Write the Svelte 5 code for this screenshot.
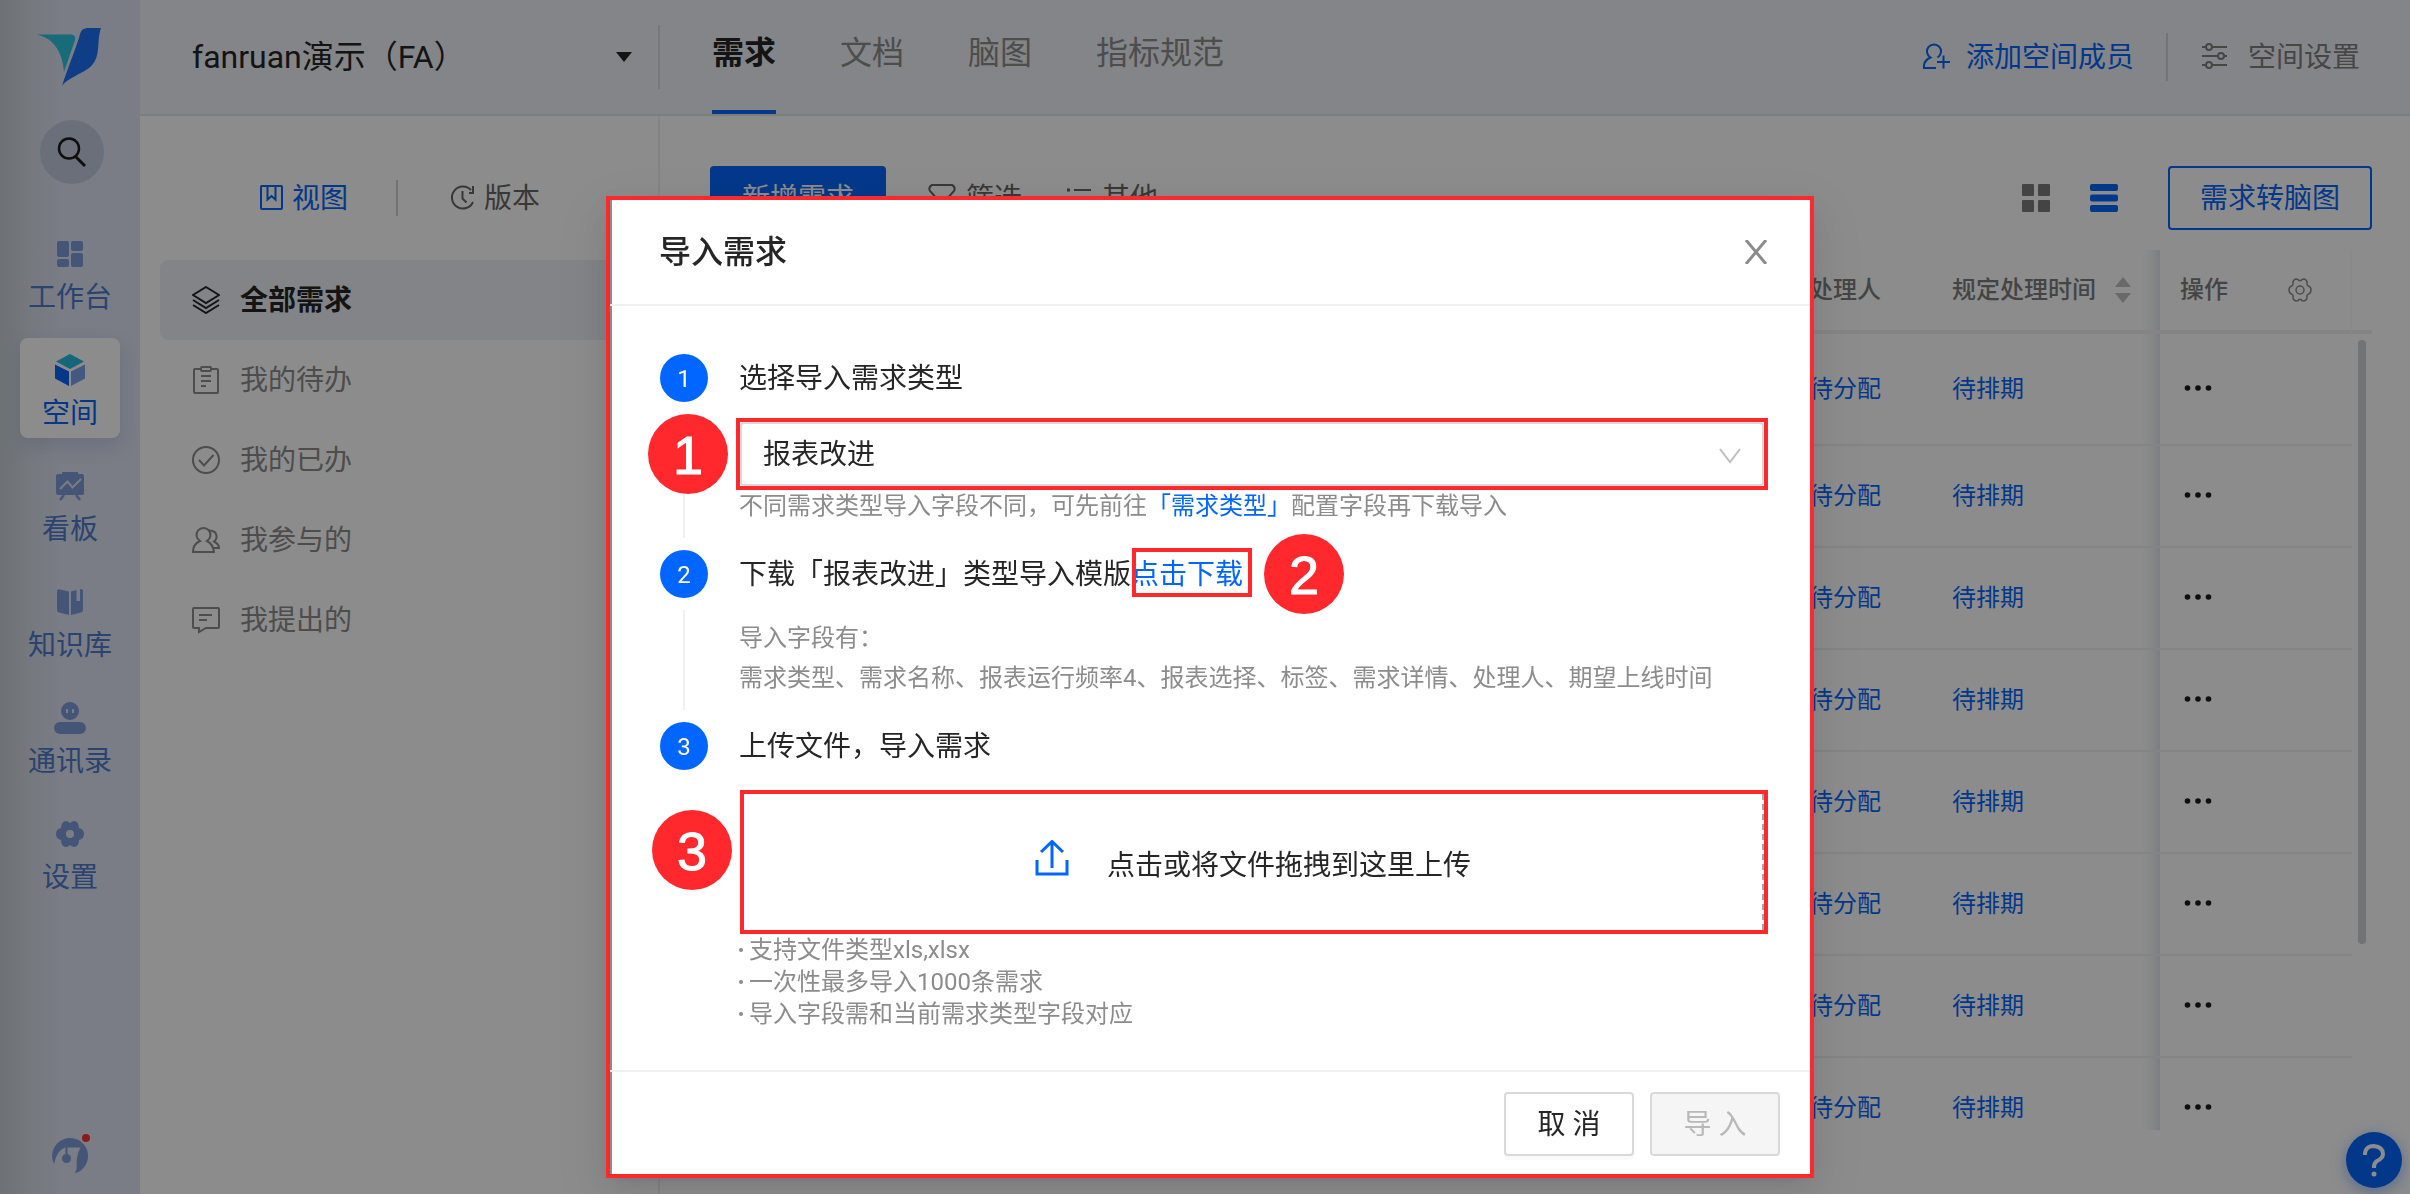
<script lang="ts">
	// Demand list page with the import dialog open

	const sideItems = [
		{ id: 'work', label: '工作台' },
		{ id: 'space', label: '空间' },
		{ id: 'board', label: '看板' },
		{ id: 'wiki', label: '知识库' },
		{ id: 'contacts', label: '通讯录' },
		{ id: 'settings', label: '设置' }
	];

	const tabs = ['需求', '文档', '脑图', '指标规范'];

	const views = [
		{ id: 'all', label: '全部需求' },
		{ id: 'todo', label: '我的待办' },
		{ id: 'done', label: '我的已办' },
		{ id: 'joined', label: '我参与的' },
		{ id: 'raised', label: '我提出的' }
	];

	const rows = Array.from({ length: 8 }, () => ({ handler: '待分配', due: '待排期' }));

	const uploadNotes = [
		'支持文件类型xls,xlsx',
		'一次性最多导入1000条需求',
		'导入字段需和当前需求类型字段对应'
	];

	let activeSide = $state('space');
	let activeTab = $state('需求');
	let activeView = $state('all');
	let demandType = $state('报表改进');
</script>

<div class="app">
	<nav class="sidebar" aria-label="主导航">
		<svg class="logo" width="65" height="58" viewBox="0 0 65 58">
			<path fill="#2cc3dc" d="M0 6.500H33C38 6.500 40 8 39 12L28 44C27 28 20 10 0 6.500Z" />
			<path fill="#1c70f5" d="M53 0H65C62 9 63 16 61.500 25C59 39 50 42 41 47C34 51 29 53 26 58C31 42 40 20 43.500 8C45 2 47 0 53 0Z" />
		</svg>
		<button class="search" type="button" aria-label="搜索">
			<svg width="32" height="32" viewBox="0 0 32 32" fill="none" stroke="#1c1c1c" stroke-width="2.500">
				<circle cx="13" cy="12.500" r="10" />
				<path d="M19.500 20.500L29 30" stroke-width="3" />
			</svg>
		</button>
		<div class="side-list">
			{#each sideItems as item}
				<button
					type="button"
					class="side-item"
					class:active={activeSide === item.id}
					onclick={() => (activeSide = item.id)}
				>
					<svg width="32" height="32" viewBox="0 0 32 32" fill="currentColor">
						{#if item.id === 'work'}
							<rect x="3" y="3" width="12" height="16" rx="2" />
							<rect x="17" y="3" width="12" height="10" rx="2" />
							<rect x="3" y="21" width="12" height="8" rx="2" />
							<rect x="17" y="15" width="12" height="14" rx="2" />
						{:else if item.id === 'space'}
							<path fill="#28bcdc" d="M16 0L30 7.500L16 15L2 7.500Z" />
							<path fill="#0566fb" d="M1 10.500L15 17.500V32L1 24.500Z" />
							<path fill="#7ba3ec" d="M31 10.500L17 17.500V32L31 24.500Z" />
						{:else if item.id === 'board'}
							<path d="M8 2H24V4H28Q30 4 30 6V23Q30 25 28 25H4Q2 25 2 23V6Q2 4 4 4H8Z" />
							<path d="M6 19L13.500 11.500L18.500 17.500L27 9" fill="none" stroke="#dde1ef" stroke-width="2" />
							<path d="M10 25L6 30M22 25L26 30" stroke="currentColor" stroke-width="2.500" />
						{:else if item.id === 'wiki'}
							<path d="M3 5Q3 3 5 3.300L15 5.500V29L5 26.500Q3 26 3 24Z" />
							<path d="M17 5.500L22.500 4V15H26V3.300Q29 3 29 5V24Q29 26 27 26.500L17 29Z" />
							<path d="M26.500 3.200Q29 2.800 29 5V15H26.500Z" />
						{:else if item.id === 'contacts'}
							<path fill-rule="evenodd" d="M16 0A9 9 0 1 1 16 18A9 9 0 1 1 16 0ZM12 7V11H14V7ZM18 7V11H20V7Z" />
							<rect x="0" y="20" width="32" height="12" rx="6" />
						{:else}
							<path
								fill-rule="evenodd"
								d="M11.500 3Q14 3 16 5Q18 3 20.500 3Q25 4 25 10Q30 11 30 16Q30 21 25 22Q25 28 20.500 29Q18 29 16 27Q14 29 11.500 29Q7 28 7 22Q2 21 2 16Q2 11 7 10Q7 4 11.500 3ZM16 12A4 4 0 1 0 16 20A4 4 0 1 0 16 12Z"
							/>
						{/if}
					</svg>
					<span>{item.label}</span>
				</button>
			{/each}
		</div>
		<button class="support" type="button" aria-label="客服">
			<svg width="44" height="44" viewBox="0 0 44 44">
				<g transform="translate(4 6)" fill="#7f9bd9">
					<path d="M2 26A18 18 0 1 1 23 35.300Q25.500 31 24.500 24Q25 16 28.500 9.500H13Q5 12 2 26Z" />
					<circle cx="14.500" cy="20.500" r="4.500" />
					<path d="M13.500 9H15.500V18H13.500Z" />
				</g>
				<circle cx="38" cy="6" r="5" fill="#f5333f" stroke="#f3dfe4" stroke-width="2" />
			</svg>
		</button>
	</nav>

	<div class="page">
		<header class="topbar">
			<button class="space-switch" type="button">
				<span>fanruan演示（FA）</span>
				<svg width="16" height="10" viewBox="0 0 16 10"><path fill="#262626" d="M0 0H16L8 10Z" /></svg>
			</button>
			<div class="tabs" role="tablist">
				{#each tabs as tab}
					<button
						type="button"
						role="tab"
						class="tab"
						class:active={activeTab === tab}
						aria-selected={activeTab === tab}
						onclick={() => (activeTab = tab)}
					>
						{tab}
					</button>
				{/each}
			</div>
			<div class="top-actions">
				<button class="top-action primary" type="button">
					<svg width="28" height="28" viewBox="0 0 28 28" fill="none" stroke="currentColor" stroke-width="2">
						<path d="M14 25H2Q1 18 8.500 14.500A7 7 0 1 1 15.500 14.500" />
						<path d="M15 19H28M21.500 12.500V25.500" />
					</svg>
					<span>添加空间成员</span>
				</button>
				<button class="top-action" type="button">
					<svg width="26" height="28" viewBox="0 0 26 28" fill="none" stroke="currentColor" stroke-width="2">
						<path d="M0 4H4M10 4H25M0 13H16M22 13H25M0 22H4M10 22H25" />
						<circle cx="7" cy="4" r="3" />
						<circle cx="19" cy="13" r="3" />
						<circle cx="7" cy="22" r="3" />
					</svg>
					<span>空间设置</span>
				</button>
			</div>
		</header>

		<div class="content">
			<aside class="views">
				<div class="view-tabs">
					<button type="button" class="view-tab active">
						<svg width="24" height="26" viewBox="0 0 24 26" fill="none" stroke="currentColor" stroke-width="2">
							<rect x="1" y="1" width="21" height="23" rx="1" />
							<path d="M7.500 1V14.500L11.500 11L15.500 14.500V1" />
						</svg>
						<span>视图</span>
					</button>
					<button type="button" class="view-tab">
						<svg width="26" height="26" viewBox="0 0 26 26" fill="none" stroke="currentColor" stroke-width="2">
							<path d="M23 17A11 11 0 1 1 21 5M23 1V8H19" />
							<path d="M12.500 6V13.500L16.500 17.500" />
						</svg>
						<span>版本</span>
					</button>
				</div>
				<ul class="view-list">
					{#each views as view}
						<li>
							<button
								type="button"
								class="view-item"
								class:active={activeView === view.id}
								onclick={() => (activeView = view.id)}
							>
								<svg width="28" height="28" viewBox="0 0 28 28" fill="none" stroke="currentColor" stroke-width="2">
									{#if view.id === 'all'}
										<path d="M14 1L27 9L14 17L1 9Z" />
										<path d="M1 14L14 22L27 14M1 19L14 27L27 19" />
									{:else if view.id === 'todo'}
										<path d="M9 3H3Q2 3 2 4V26Q2 27 3 27H25Q26 27 26 26V4Q26 3 25 3H19" />
										<rect x="9" y="1" width="10" height="4" rx="1" />
										<path d="M9 10H19M9 15H19M9 20H14" />
									{:else if view.id === 'done'}
										<circle cx="14" cy="14" r="13" />
										<path d="M7 14L12 19.500L21.500 9" />
									{:else if view.id === 'joined'}
										<path d="M8 15A7 7 0 1 1 15 15Q21 18 22 26H1Q1 18 8 15Z" />
										<path d="M16 4.500Q24 4 24.500 10Q25 13 22 15.500Q27 18 27 22H22" />
									{:else}
										<path d="M2 2H26Q27 2 27 3V21Q27 22 26 22H14L7 26V22H2Q1 22 1 21V3Q1 2 2 2Z" />
										<path d="M7 9H20M7 14H15" />
									{/if}
								</svg>
								<span>{view.label}</span>
							</button>
						</li>
					{/each}
				</ul>
			</aside>

			<main class="main">
				<div class="toolbar">
					<button class="btn-primary" type="button">新增需求</button>
					<button class="tool" type="button">
						<svg width="28" height="28" viewBox="0 0 28 28" fill="none" stroke="currentColor" stroke-width="2">
							<path d="M4 1H24Q28 3 26 7L18 16V26H10V16L2 7Q0 3 4 1Z" />
						</svg>
						<span>筛选</span>
					</button>
					<button class="tool" type="button">
						<svg width="26" height="28" viewBox="0 0 26 28" fill="none" stroke="currentColor" stroke-width="2">
							<path d="M8 6H25M8 15H25M8 24H25" />
							<path d="M1 6H4M1 15H4M1 24H4" stroke-width="3" />
						</svg>
						<span>其他</span>
					</button>
					<div class="layout-switch">
						<button type="button" aria-label="卡片视图">
							<svg width="28" height="28" viewBox="0 0 28 28" fill="#7d7d7d">
								<rect width="12" height="12" rx="1" />
								<rect x="16" width="12" height="12" rx="1" />
								<rect y="16" width="12" height="12" rx="1" />
								<rect x="16" y="16" width="12" height="12" rx="1" />
							</svg>
						</button>
						<button type="button" aria-label="列表视图">
							<svg width="28" height="28" viewBox="0 0 28 28" fill="#0566fb">
								<rect width="28" height="7" rx="2" />
								<rect y="10.500" width="28" height="7" rx="2" />
								<rect y="21" width="28" height="7" rx="2" />
							</svg>
						</button>
					</div>
					<button class="btn-outline" type="button">需求转脑图</button>
				</div>

				<div class="table-wrap">
					<table>
						<colgroup>
							<col />
							<col class="col-handler" />
							<col class="col-due" />
							<col class="col-action" />
						</colgroup>
						<thead>
							<tr>
								<th></th>
								<th>处理人</th>
								<th class="edge">
									<div class="th-due">
										<span>规定处理时间</span>
										<svg width="16" height="26" viewBox="0 0 16 26" fill="#bfbfbf">
											<path d="M8 0L16 10H0ZM8 26L16 16H0Z" />
										</svg>
									</div>
								</th>
								<th class="action-head">
									<div class="th-action">
										<span>操作</span>
										<svg width="24" height="24" viewBox="0 0 24 24" fill="none" stroke="#8c8c8c" stroke-width="1.500">
											<path
												d="M8 1Q10 1 11 2.500H13Q14 1 16 1Q19.500 2 19 6Q19 7.500 20.500 8Q23 9 23 12Q23 15 20.500 16Q19 16.500 19 18Q19.500 22 16 23Q14 23 13 21.500H11Q10 23 8 23Q4.500 22 5 18Q5 16.500 3.500 16Q1 15 1 12Q1 9 3.500 8Q5 7.500 5 6Q4.500 2 8 1Z"
											/>
											<circle cx="12" cy="12" r="4" />
										</svg>
									</div>
								</th>
							</tr>
						</thead>
						<tbody>
							{#each rows as row}
								<tr>
									<td></td>
									<td><a href="#handler">{row.handler}</a></td>
									<td class="edge"><a href="#due">{row.due}</a></td>
									<td>
										<button class="more" type="button" aria-label="更多操作">
											<svg width="28" height="8" viewBox="0 0 28 8" fill="#1c1c1c">
												<circle cx="3.500" cy="3" r="2.800" />
												<circle cx="14" cy="3" r="2.800" />
												<circle cx="24.500" cy="3" r="2.800" />
											</svg>
										</button>
									</td>
								</tr>
							{/each}
						</tbody>
					</table>
					<div class="gutter"><div class="thumb"></div></div>
				</div>
			</main>
		</div>
	</div>

	<button class="help" type="button" aria-label="帮助">
		<svg width="24" height="34" viewBox="0 0 24 34" fill="none" stroke="#fff" stroke-width="4">
			<path d="M3 12V10Q4 3 12 3Q21 4 21 11Q21 15 15 18Q12 20 12 24V25" />
			<circle cx="12" cy="31" r="2.500" fill="#fff" stroke="none" />
		</svg>
	</button>
</div>

<div class="mask">
	<div class="modal" role="dialog" aria-modal="true" aria-labelledby="import-title">
		<div class="modal-header">
			<h2 id="import-title">导入需求</h2>
			<button class="close" type="button" aria-label="关闭">
				<svg width="24" height="24" viewBox="0 0 24 24" stroke="#8c8c8c" stroke-width="3">
					<path d="M2 0L22 24M22 0L2 24" />
				</svg>
			</button>
		</div>

		<ol class="steps">
			<li class="step">
				<div class="marker"><span class="dot">1</span></div>
				<div class="step-content">
					<label class="step-title" for="demand-type">选择导入需求类型</label>
					<div class="callout callout-select">
						<span class="pin pin-select">1</span>
						<select id="demand-type" bind:value={demandType}>
							<option>报表改进</option>
						</select>
						<svg class="chevron" width="22" height="16" viewBox="0 0 22 16" fill="none" stroke="#bfbfbf" stroke-width="2">
							<path d="M1 1L11 14L21 1" />
						</svg>
					</div>
					<p class="hint">
						不同需求类型导入字段不同，可先前往<a href="#types">「需求类型」</a>配置字段再下载导入
					</p>
				</div>
			</li>
			<li class="step">
				<div class="marker"><span class="dot">2</span></div>
				<div class="step-content fields">
					<div class="step-title">
						下载「{demandType}」类型导入模版<a class="download" href="#template">点击下载<span class="pin pin-download">2</span></a>
					</div>
					<p class="field-list">
						导入字段有：<br />需求类型、需求名称、报表运行频率4、报表选择、标签、需求详情、处理人、期望上线时间
					</p>
				</div>
			</li>
			<li class="step">
				<div class="marker"><span class="dot">3</span></div>
				<div class="step-content">
					<div class="step-title">上传文件，导入需求</div>
					<div class="callout callout-upload">
						<span class="pin pin-upload">3</span>
						<label class="upload">
							<input type="file" accept=".xls,.xlsx" />
							<svg width="34" height="44" viewBox="0 0 34 44" fill="none" stroke="#0066ff" stroke-width="3">
								<path d="M2 20V34H32V20" />
								<path d="M17 28V2M6 12L17 1.500L28 12" />
							</svg>
							<span>点击或将文件拖拽到这里上传</span>
						</label>
					</div>
					<ul class="notes">
						{#each uploadNotes as note}
							<li>{note}</li>
						{/each}
					</ul>
				</div>
			</li>
		</ol>

		<div class="modal-footer">
			<button class="btn" type="button">取 消</button>
			<button class="btn" type="button" disabled>导 入</button>
		</div>
	</div>
</div>

<style>
	:global(body) {
		overflow: hidden;
		font-family: Roboto, 'Noto Sans CJK SC', sans-serif;
		font-size: 28px;
		line-height: 40px;
		color: #262626;
	}

	button {
		padding: 0;
		border: none;
		background: none;
		font: inherit;
		color: inherit;
		white-space: nowrap;
		cursor: pointer;
	}

	a {
		color: #0066ff;
		text-decoration: none;
	}

	svg {
		display: block;
		flex-shrink: 0;
	}

	ul,
	ol {
		margin: 0;
		padding: 0;
		list-style: none;
	}

	h2,
	p {
		margin: 0;
	}

	.app {
		display: flex;
		height: 100vh;
		background: #fff;
	}

	/* Sidebar */
	.sidebar {
		display: flex;
		flex-direction: column;
		align-items: center;
		width: 140px;
		flex-shrink: 0;
		box-sizing: border-box;
		padding: 28px 0 18px;
		background: linear-gradient(to right, #c6cfd5, #d6dbe5 30px, #dee3f3 60px);
	}

	.logo {
		margin-right: 4px;
	}

	.search {
		display: flex;
		align-items: center;
		justify-content: center;
		width: 64px;
		height: 64px;
		margin: 34px 0 38px 4px;
		border-radius: 50%;
		background: #c2cbdc;
	}

	.side-list {
		display: flex;
		flex-direction: column;
		gap: 16px;
	}

	.side-item {
		display: flex;
		flex-direction: column;
		align-items: center;
		gap: 8px;
		width: 100px;
		height: 100px;
		box-sizing: border-box;
		padding-top: 16px;
		border-radius: 8px;
		color: #7f9bd9;
	}

	.side-item span {
		color: #4f7acb;
	}

	.side-item.active {
		background: #fff;
		box-shadow: 0 8px 20px rgba(80, 110, 170, 0.2);
	}

	.side-item.active span {
		color: #0566fb;
	}

	.support {
		margin: auto 0 0;
	}

	/* Top bar */
	.page {
		display: flex;
		flex: 1;
		flex-direction: column;
		min-width: 0;
	}

	.topbar {
		display: flex;
		align-items: center;
		height: 114px;
		flex-shrink: 0;
		padding-right: 50px;
		border-bottom: 2px solid #e0e3eb;
		background: #f0f2f7;
	}

	.space-switch {
		display: flex;
		align-items: center;
		justify-content: space-between;
		width: 520px;
		height: 64px;
		box-sizing: border-box;
		padding: 0 26px 0 52px;
		border-right: 2px solid #d8dbe2;
		font-size: 32px;
	}

	.tabs {
		display: flex;
		gap: 64px;
		height: 100%;
		margin-left: 52px;
	}

	.tab {
		box-sizing: border-box;
		padding-bottom: 4px;
		border-bottom: 4px solid transparent;
		font-size: 32px;
		color: #8c8c8c;
	}

	.tab.active {
		border-color: #0566fb;
		font-weight: 700;
		color: #262626;
	}

	.top-actions {
		display: flex;
		align-items: center;
		margin-left: auto;
	}

	.top-action {
		display: flex;
		align-items: center;
		gap: 16px;
		height: 48px;
		color: #808080;
	}

	.top-action + .top-action {
		gap: 20px;
		margin-left: 32px;
		padding-left: 34px;
		border-left: 2px solid #d0d3da;
	}

	.top-action.primary {
		color: #0566fb;
	}

	.top-action span,
	.view-tab span,
	.view-item span {
		padding-top: 2px;
	}

	/* View panel */
	.content {
		display: flex;
		flex: 1;
		min-height: 0;
	}

	.views {
		width: 520px;
		flex-shrink: 0;
		box-sizing: border-box;
		padding: 64px 18px 0 20px;
		border-right: 2px solid #f0f0f0;
	}

	.view-tabs {
		display: flex;
		align-items: center;
		justify-content: center;
		height: 36px;
		margin-bottom: 44px;
	}

	.view-tab {
		display: flex;
		align-items: center;
		gap: 8px;
		height: 36px;
		color: #666;
	}

	.view-tab + .view-tab {
		margin-left: 48px;
		padding-left: 52px;
		border-left: 2px solid #d0d0d0;
	}

	.view-tab.active {
		color: #0566fb;
	}

	.view-item {
		display: flex;
		align-items: center;
		gap: 20px;
		width: 100%;
		height: 80px;
		padding: 0 32px;
		border-radius: 8px;
		color: #8c8c8c;
	}

	.view-item.active {
		background: #eef0f6;
		font-weight: 700;
		color: #262626;
	}

	/* Demand table */
	.main {
		display: flex;
		flex: 1;
		flex-direction: column;
		min-width: 0;
		padding: 50px 38px 64px 50px;
	}

	.toolbar {
		display: flex;
		align-items: center;
		margin-bottom: 20px;
	}

	.btn-primary,
	.btn-outline {
		height: 64px;
		padding: 2px 32px 0;
		border-radius: 4px;
	}

	.btn-primary {
		background: #0566fb;
		color: #fff;
	}

	.btn-outline {
		padding: 2px 30px 0;
		border: 2px solid #0566fb;
		color: #0566fb;
	}

	.tool {
		display: flex;
		align-items: center;
		gap: 10px;
		margin-left: 42px;
		color: #666;
	}

	.tool + .tool {
		margin-left: 44px;
	}

	.tool span {
		padding-top: 2px;
	}

	.layout-switch {
		display: flex;
		gap: 40px;
		margin: 0 50px 0 auto;
	}

	.table-wrap {
		display: flex;
		flex: 1;
		min-height: 0;
		overflow: hidden;
		font-size: 24px;
		line-height: 32px;
	}

	table {
		flex: 1;
		width: 100%;
		height: max-content;
		table-layout: fixed;
		border-spacing: 0;
	}

	.col-handler {
		width: 143px;
	}

	.col-due {
		width: 228px;
	}

	.col-action {
		width: 192px;
	}

	th,
	td {
		box-sizing: border-box;
		height: 102px;
		padding: 0 0 0 20px;
		border-bottom: 2px solid #f0f0f0;
		text-align: left;
	}

	th {
		height: 84px;
		border-bottom: 4px solid #f0f0f0;
		font-weight: 500;
		color: #7d7d7d;
	}

	tbody tr:first-child td {
		height: 112px;
	}

	.edge {
		background: linear-gradient(to left, rgba(30, 50, 90, 0.13), rgba(30, 50, 90, 0.05) 8px, transparent 18px);
	}

	.th-due {
		display: flex;
		align-items: center;
		gap: 19px;
	}

	.th-action {
		display: flex;
		align-items: center;
		gap: 60px;
	}

	.action-head {
		border-right: 2px solid #fafafa;
	}

	td a {
		color: #0566fb;
	}

	.more {
		display: block;
		margin-left: 4px;
	}

	.gutter {
		width: 20px;
		flex-shrink: 0;
		padding-top: 80px;
	}

	.gutter::before {
		content: '';
		display: block;
		height: 4px;
		background: #f0f0f0;
	}

	.thumb {
		width: 8px;
		height: 604px;
		margin: 6px auto 0;
		border-radius: 4px;
		background: #cfd1d4;
	}

	.help {
		position: fixed;
		right: 8px;
		bottom: 6px;
		display: flex;
		align-items: center;
		justify-content: center;
		width: 56px;
		height: 56px;
		border-radius: 50%;
		background: #0566fb;
		box-shadow: 0 4px 16px rgba(5, 102, 251, 0.4);
	}

	/* Import dialog */
	.mask {
		position: fixed;
		inset: 0;
		display: flex;
		align-items: flex-start;
		justify-content: center;
		padding: 196px 0 0 10px;
		background: rgba(0, 0, 0, 0.45);
	}

	.modal {
		width: 1208px;
		box-sizing: border-box;
		border: 4px solid #ff282d;
		background: #fff;
		box-shadow:
			inset 2px 0 #8c8c8c,
			0 6px 12px -8px rgba(0, 0, 0, 0.12),
			0 12px 32px rgba(0, 0, 0, 0.08),
			0 18px 56px 16px rgba(0, 0, 0, 0.05);
	}

	.modal-header {
		display: flex;
		align-items: center;
		justify-content: space-between;
		height: 104px;
		padding: 0 42px 0 49px;
		border-bottom: 2px solid #f0f0f0;
	}

	.modal-header h2 {
		font-size: 32px;
		font-weight: 500;
	}

	.steps {
		padding: 48px 42px 40px 50px;
	}

	.step {
		display: flex;
		gap: 31px;
	}

	.marker {
		display: flex;
		flex-direction: column;
		align-items: center;
		width: 48px;
		flex-shrink: 0;
	}

	.dot {
		width: 48px;
		height: 46px;
		padding-top: 2px;
		border-radius: 50%;
		background: #0066ff;
		font-size: 24px;
		line-height: 46px;
		text-align: center;
		color: #fff;
	}

	.step:not(:last-child) .marker::after {
		content: '';
		flex: 1;
		width: 2px;
		margin: 12px 0;
		background: #f0f0f0;
	}

	.step-content {
		flex: 1;
		padding-bottom: 28px;
	}

	.step-content.fields {
		padding-bottom: 24px;
	}

	.step:last-child .step-content {
		padding-bottom: 0;
	}

	.step-title {
		display: block;
		height: 48px;
		line-height: 50px;
	}

	.callout {
		position: relative;
		border: 4px solid #ff282d;
	}

	.callout-select {
		margin: 16px 0 0 -3px;
	}

	.callout-upload {
		margin: 20px 0 0 1px;
	}

	.pin {
		position: absolute;
		z-index: 1;
		left: -92px;
		width: 80px;
		height: 80px;
		border-radius: 50%;
		background: #ff282d;
		font-family: 'Liberation Sans', sans-serif;
		font-size: 54px;
		line-height: 82px;
		text-align: center;
		color: #fff;
		-webkit-text-stroke: 1px #fff;
	}

	.pin-select {
		top: -8px;
	}

	.pin-upload {
		top: 16px;
	}

	.pin-download {
		top: -16px;
		left: 133px;
	}

	select {
		display: block;
		width: 100%;
		height: 64px;
		padding: 2px 60px 0 21px;
		border: 2px solid #d9d9d9;
		border-radius: 4px;
		appearance: none;
		background: #fff;
		font: inherit;
		color: inherit;
	}

	.chevron {
		position: absolute;
		top: 26px;
		right: 23px;
		pointer-events: none;
	}

	.hint,
	.notes {
		font-size: 24px;
		line-height: 32px;
		color: #8c8c8c;
	}

	.download {
		position: relative;
		display: inline-block;
	}

	.download::after {
		content: '';
		position: absolute;
		inset: -2px -9px 3px 1px;
		border: 4px solid #ff282d;
	}

	.field-list {
		margin-top: 20px;
		font-size: 24px;
		color: #8c8c8c;
	}

	.upload {
		display: flex;
		align-items: center;
		justify-content: center;
		gap: 38px;
		height: 136px;
		border-right: 2px dashed #a6a6a6;
		cursor: pointer;
	}

	.upload span {
		padding-top: 8px;
	}

	.upload input {
		position: absolute;
		opacity: 0;
		width: 1px;
		height: 1px;
	}

	.notes li {
		display: flex;
		align-items: center;
		gap: 6px;
	}

	.notes li::before {
		content: '';
		width: 4px;
		height: 4px;
		border-radius: 50%;
		background: #8c8c8c;
	}

	.modal-footer {
		display: flex;
		justify-content: flex-end;
		gap: 16px;
		padding: 20px 30px 18px;
		border-top: 2px solid #f0f0f0;
	}

	.btn {
		width: 130px;
		height: 64px;
		padding-top: 2px;
		border: 2px solid #d9d9d9;
		border-radius: 4px;
		background: #fff;
		box-shadow: 0 4px 0 rgba(0, 0, 0, 0.02);
	}

	.btn:disabled {
		background: #f5f5f5;
		box-shadow: none;
		color: #b8b8b8;
		cursor: default;
	}
</style>
